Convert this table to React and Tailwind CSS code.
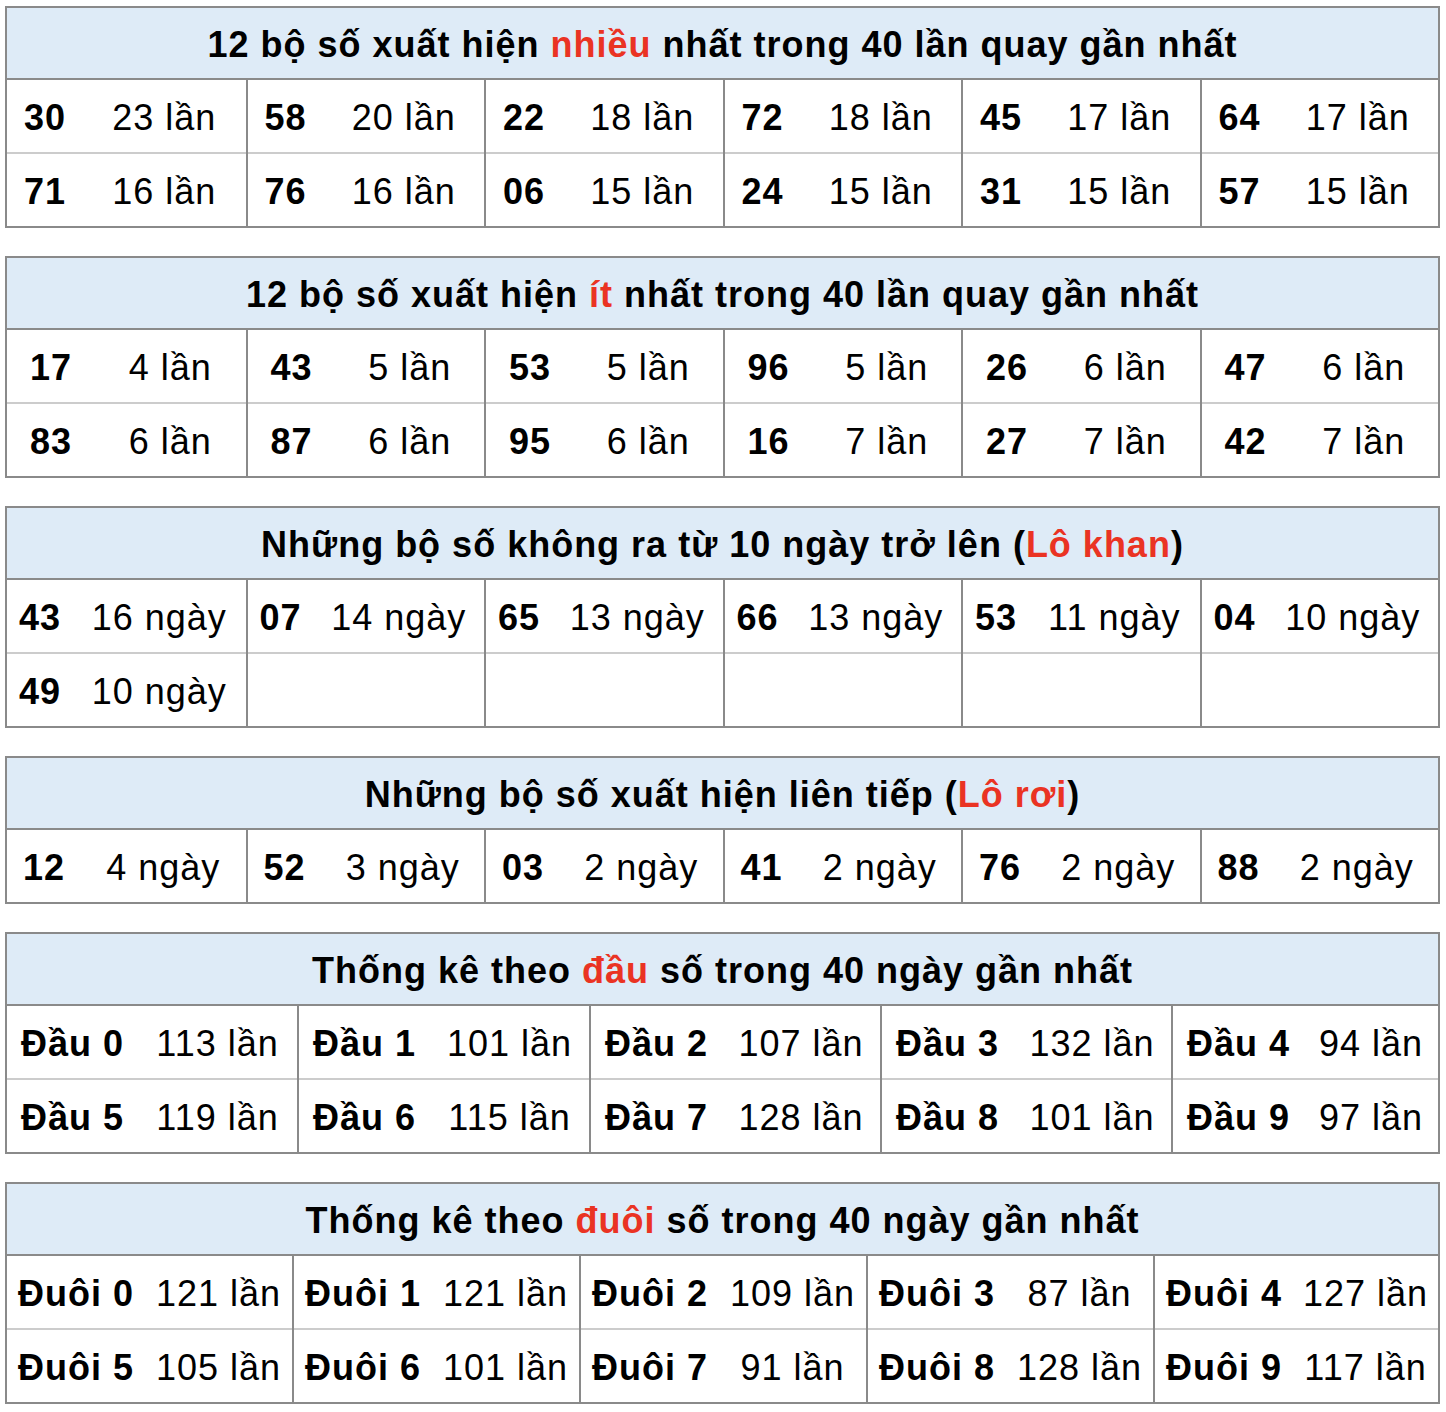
import React from "react";

const RED = "text-[#ea3323]";

const t1 = [
  [["30", "23 lần"], ["71", "16 lần"]],
  [["58", "20 lần"], ["76", "16 lần"]],
  [["22", "18 lần"], ["06", "15 lần"]],
  [["72", "18 lần"], ["24", "15 lần"]],
  [["45", "17 lần"], ["31", "15 lần"]],
  [["64", "17 lần"], ["57", "15 lần"]],
];
const t2 = [
  [["17", "4 lần"], ["83", "6 lần"]],
  [["43", "5 lần"], ["87", "6 lần"]],
  [["53", "5 lần"], ["95", "6 lần"]],
  [["96", "5 lần"], ["16", "7 lần"]],
  [["26", "6 lần"], ["27", "7 lần"]],
  [["47", "6 lần"], ["42", "7 lần"]],
];
const t3 = [
  [["43", "16 ngày"], ["49", "10 ngày"]],
  [["07", "14 ngày"], ["", ""]],
  [["65", "13 ngày"], ["", ""]],
  [["66", "13 ngày"], ["", ""]],
  [["53", "11 ngày"], ["", ""]],
  [["04", "10 ngày"], ["", ""]],
];
const t4 = [
  [["12", "4 ngày"]],
  [["52", "3 ngày"]],
  [["03", "2 ngày"]],
  [["41", "2 ngày"]],
  [["76", "2 ngày"]],
  [["88", "2 ngày"]],
];
const t5 = [
  [["Đầu 0", "113 lần"], ["Đầu 5", "119 lần"]],
  [["Đầu 1", "101 lần"], ["Đầu 6", "115 lần"]],
  [["Đầu 2", "107 lần"], ["Đầu 7", "128 lần"]],
  [["Đầu 3", "132 lần"], ["Đầu 8", "101 lần"]],
  [["Đầu 4", "94 lần"], ["Đầu 9", "97 lần"]],
];
const t6 = [
  [["Đuôi 0", "121 lần"], ["Đuôi 5", "105 lần"]],
  [["Đuôi 1", "121 lần"], ["Đuôi 6", "101 lần"]],
  [["Đuôi 2", "109 lần"], ["Đuôi 7", "91 lần"]],
  [["Đuôi 3", "87 lần"], ["Đuôi 8", "128 lần"]],
  [["Đuôi 4", "127 lần"], ["Đuôi 9", "117 lần"]],
];

function Table({ title, cols, gridCls, subCls }) {
  return (
    <div className="border-2 border-[#8a8a8a]">
      <div className="h-[72px] pt-[3px] bg-[#deebf7] border-b-2 border-[#8a8a8a] flex items-center justify-center text-[36px] tracking-[1px] font-bold text-black">
        <span>{title}</span>
      </div>
      <div className={`grid ${gridCls}`}>
        {cols.map((col, ci) => (
          <div key={ci} className={ci > 0 ? "border-l-2 border-[#8a8a8a]" : ""}>
            {col.map((cell, ri) => (
              <div
                key={ri}
                className={`grid ${subCls} pt-[3px] items-center text-center text-[36px] tracking-[1px] text-black ${
                  ri > 0 ? "border-t-2 border-[#cccccc] h-[74px]" : "h-[72px]"
                }`}
              >
                <span className="font-bold whitespace-nowrap">{cell[0]}</span>
                <span className="whitespace-nowrap">{cell[1]}</span>
              </div>
            ))}
          </div>
        ))}
      </div>
    </div>
  );
}

export default function App() {
  return (
    <div
      className="bg-white w-[1446px] min-h-[1412px] pt-[6px] pl-[5px]"
      style={{ fontFamily: "'Liberation Sans', Arial, sans-serif" }}
    >
      <div className="w-[1435px] flex flex-col gap-[28px]">
        <Table
          title={<>12 bộ số xuất hiện <span className={RED}>nhiều</span> nhất trong 40 lần quay gần nhất</>}
          cols={t1}
          gridCls="grid-cols-6"
          subCls="grid-cols-[76px_1fr]"
        />
        <Table
          title={<>12 bộ số xuất hiện <span className={RED}>ít</span> nhất trong 40 lần quay gần nhất</>}
          cols={t2}
          gridCls="grid-cols-6"
          subCls="grid-cols-[88px_1fr]"
        />
        <Table
          title={<>Những bộ số không ra từ 10 ngày trở lên (<span className={RED}>Lô khan</span>)</>}
          cols={t3}
          gridCls="grid-cols-6"
          subCls="grid-cols-[66px_1fr]"
        />
        <Table
          title={<>Những bộ số xuất hiện liên tiếp (<span className={RED}>Lô rơi</span>)</>}
          cols={t4}
          gridCls="grid-cols-6"
          subCls="grid-cols-[74px_1fr]"
        />
        <Table
          title={<>Thống kê theo <span className={RED}>đầu</span> số trong 40 ngày gần nhất</>}
          cols={t5}
          gridCls="grid-cols-[290px_292px_291px_291px_267px]"
          subCls="grid-cols-[131px_1fr]"
        />
        <Table
          title={<>Thống kê theo <span className={RED}>đuôi</span> số trong 40 ngày gần nhất</>}
          cols={t6}
          gridCls="grid-cols-[285px_287px_287px_287px_285px]"
          subCls="grid-cols-[138px_1fr]"
        />
      </div>
    </div>
  );
}
